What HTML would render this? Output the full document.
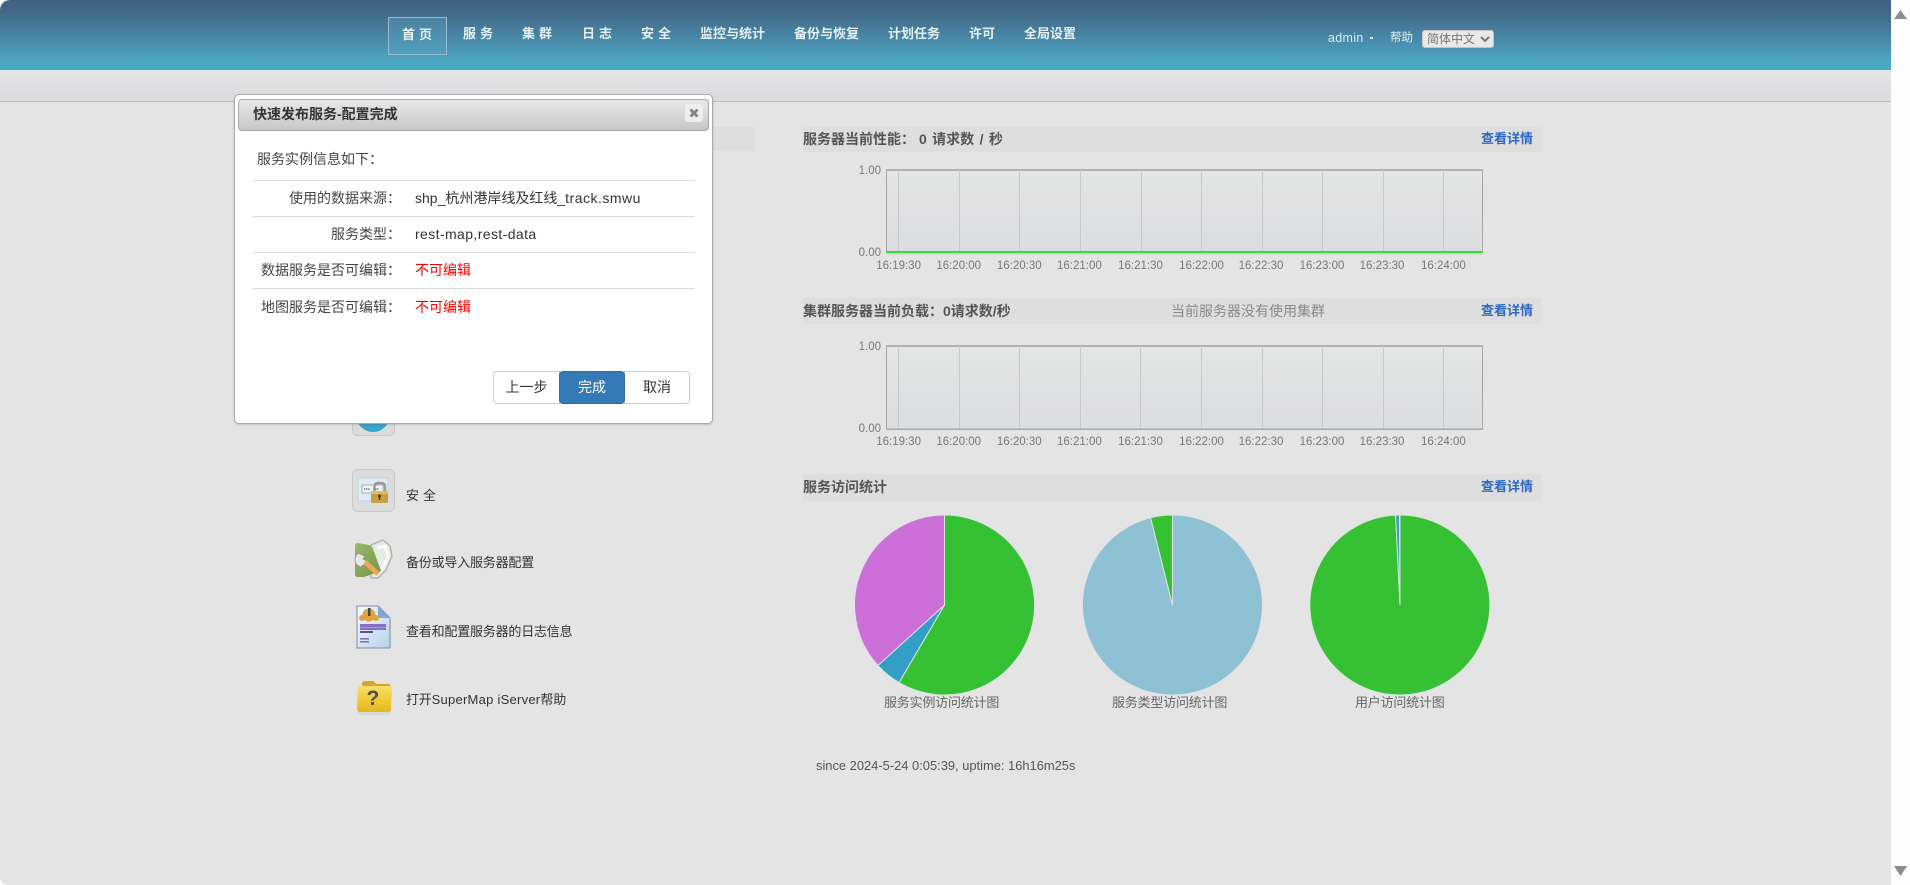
<!DOCTYPE html>
<html lang="zh-CN"><head><meta charset="utf-8"><title>SuperMap iServer</title>
<style>
html,body{margin:0;padding:0;width:1910px;height:885px;overflow:hidden;background:#fff}
body{font-family:"Liberation Sans","Noto Sans CJK SC",sans-serif;font-size:13px;color:#444;position:relative}
.a{position:absolute;white-space:nowrap;line-height:20px}
#page{position:absolute;left:0;top:0;width:1891px;height:885px;background:#e4e4e4;border-radius:10px 0 0 8px;overflow:hidden}
#hd{position:absolute;left:0;top:0;width:100%;height:70px;background:linear-gradient(#41607f 0,#436a89 20%,#4a8fae 62%,#4ba8c4 90%,#4ba8c4 100%)}
#sub{position:absolute;left:0;top:70px;width:100%;height:31px;background:linear-gradient(#e5e5e5,#dadbde);border-bottom:1px solid #b4bbc5}
.nav{color:#e6f0f3;font-weight:bold;font-size:13px;top:24px}
.hbar{position:absolute;left:803px;width:738px;background:#dedede}
.ht{font-weight:bold;color:#555;font-size:14px}
.more{left:1481px;color:#2c68c6;font-weight:bold}
.left{color:#333;letter-spacing:-.2px}
#dlg{position:absolute;left:234px;top:94px;width:477px;height:328px;background:#fff;border:1px solid #a9a9a9;border-radius:5px;box-shadow:0 1px 2px rgba(0,0,0,.15)}
#tb{position:absolute;left:3px;top:4px;width:469px;height:30px;background:linear-gradient(#e8e8e8,#c7c7c7);border:1px solid #a8a8a8;border-radius:4px}
.ln{position:absolute;left:252px;width:443px;height:1px;background:#dcdcdc}
.lb{left:232px;width:160px;text-align:right;color:#444;font-size:14px}
.c{display:inline-block;width:5px;text-align:left;overflow:visible}
.v{left:415px;color:#333;font-size:14px}
.btn{position:absolute;top:371px;height:31px;line-height:31px;text-align:center;background:#fff;border:1px solid #ccc;border-radius:4px;color:#333;font-size:14px}
svg{position:absolute;left:0;top:0}
</style></head><body>
<div id="page">
<div id="hd"></div><div id="sub"></div>
<div style="position:absolute;left:388px;top:17px;width:57px;height:36px;border:1px solid #9cbccb;background:rgba(90,170,195,.35)"></div>
<div class="a nav" style="left:402px;top:25px;letter-spacing:4px">首页</div>
<div class="a nav" style="left:463px;letter-spacing:4px">服务</div>
<div class="a nav" style="left:522px;letter-spacing:4px">集群</div>
<div class="a nav" style="left:582px;letter-spacing:4px">日志</div>
<div class="a nav" style="left:641px;letter-spacing:4px">安全</div>
<div class="a nav" style="left:700px">监控与统计</div>
<div class="a nav" style="left:794px">备份与恢复</div>
<div class="a nav" style="left:888px">计划任务</div>
<div class="a nav" style="left:969px">许可</div>
<div class="a nav" style="left:1024px">全局设置</div>
<div class="a" style="left:1328px;top:28px;color:#d6ebf1;font-size:12.5px;letter-spacing:.3px">admin</div>
<div style="position:absolute;left:1370px;top:37px;width:3px;height:2px;background:#d6ebf1"></div>
<div class="a" style="left:1390px;top:28px;color:#e4f0f3;font-size:11.5px">帮助</div>
<select style="position:absolute;left:1422px;top:30px;width:72px;height:18px;padding:0;margin:0;font:12px 'Liberation Sans','Noto Sans CJK SC',sans-serif;color:#777;background:#e9e9e9;border:1px solid #c4c4c4;border-radius:3px"><option>简体中文</option></select>

<div style="position:absolute;left:300px;top:127px;width:455px;height:24px;background:#dedede"></div>

<div style="position:absolute;left:352px;top:393px;width:41px;height:41px;background:#dcdcdc;border:1px solid #c9c9c9;border-radius:6px"></div>
<div style="position:absolute;left:352px;top:469px;width:41px;height:41px;background:#dcdcdc;border:1px solid #c9c9c9;border-radius:6px"></div>
<div class="a" style="left:406px;top:486px;letter-spacing:4px;color:#333">安全</div>
<div class="a left" style="left:406px;top:553px">备份或导入服务器配置</div>
<div class="a left" style="left:406px;top:622px">查看和配置服务器的日志信息</div>
<div class="a left" style="left:406px;top:690px">打开<span style="letter-spacing:.25px">SuperMap iServer</span>帮助</div>

<svg width="1891" height="885" viewBox="0 0 1891 885">
<defs>
<linearGradient id="g" x1="0" y1="0" x2="0" y2="1"><stop offset="0" stop-color="#e4e5e4"/><stop offset="1" stop-color="#dcdde0"/></linearGradient>
<linearGradient id="dc" x1="0" y1="0" x2="1" y2="1"><stop offset="0" stop-color="#f6f9fc"/><stop offset="1" stop-color="#b5d2ee"/></linearGradient>
<linearGradient id="fy" x1="0" y1="0" x2="0" y2="1"><stop offset="0" stop-color="#f8e06c"/><stop offset=".5" stop-color="#f3cb36"/><stop offset="1" stop-color="#e6b624"/></linearGradient>
<linearGradient id="gf" x1="0" y1="0" x2="1" y2="1"><stop offset="0" stop-color="#9abb6a"/><stop offset="1" stop-color="#6f9347"/></linearGradient>
</defs>
<circle cx="373" cy="415" r="17" fill="#3aa6cc"/>
<rect x="358" y="478" width="30" height="23" rx="2" fill="#dfebf2" stroke="#b7d6e8"/>
<rect x="362" y="485" width="21" height="8" fill="#f1f4f6" stroke="#8aa0b2" stroke-width=".8"/>
<path d="M364 489h6M373 489h6" stroke="#667" stroke-width="1.6" stroke-dasharray="1.3 .8"/>
<path d="M374.5 492v-5q0-4 4-4h2.5q4 0 4 4v5" fill="none" stroke="#9c9a94" stroke-width="2.4"/>
<rect x="371" y="491" width="17" height="12" rx="1.5" fill="#c99f45"/>
<rect x="371" y="491" width="17" height="3" fill="#e0bd6b"/>
<circle cx="379.5" cy="496" r="1.6" fill="#5a3e12"/><rect x="378.8" y="496" width="1.5" height="4" fill="#5a3e12"/>

<path d="M371 545L383 540L390 546L392 556L386 570L378 578L371 578Z" fill="#e8eae6" stroke="#a9b8a6" stroke-width="1.4"/>
<path d="M377 548L385 546L388 556L382 570" fill="none" stroke="#fafafa" stroke-width="3"/>
<path d="M355 546Q355 543 358 543L369 545Q372 546 373 549L381 571L364 577L358 577Q355 577 355 574Z" fill="url(#gf)"/>
<path d="M358 553L364 556L366 555L363 559L368 562L367 566L363 565L361 567Q355 565 355 560Q355 556 358 553Z" fill="#e6e8e2" stroke="#8f8f88" stroke-width=".7"/>
<path d="M365 562L378 574" stroke="#eba958" stroke-width="5"/>

<path d="M357 606H378L390 618V648H357Z" fill="url(#dc)" stroke="#7d88a5"/>
<path d="M378 606L390 618H378Z" fill="#7fa7da"/>
<circle cx="369" cy="615" r="6.5" fill="#e2a33f"/><circle cx="362" cy="618" r="3" fill="#e2a33f"/><circle cx="376" cy="618" r="3" fill="#e2a33f"/>
<rect x="368" y="608" width="2.5" height="8" fill="#444"/>
<rect x="360" y="624" width="26" height="6" fill="#8370c2"/>
<rect x="360" y="627" width="26" height="1" fill="#a99be0"/>
<rect x="360" y="631" width="13" height="2" fill="#5d4aa5"/>
<rect x="360" y="638" width="9" height="1.6" fill="#8370c2"/><rect x="360" y="641" width="9" height="1.6" fill="#8370c2"/>

<path d="M362 684Q362 681 365 681H372Q375 681 376 684H388Q391 684 391 687V696H362Z" fill="#d9a22d"/>
<path d="M358 688Q358 686 360 686H390Q392 686 392 689L391 709Q391 712 388 712H360Q357 712 357 709Z" fill="url(#fy)"/>
<path d="M357 712H391L388 715H360Z" fill="#d8d8d4"/>
<text x="366.5" y="705" font-family="Liberation Sans" font-size="21" font-weight="bold" fill="#4f4f4f">?</text>

<g id="c1">
<rect x="886.5" y="170" width="596" height="82" fill="url(#g)" stroke="#a4a4a4"/>
<rect x="886" y="169" width="597" height="2" fill="#b1b1b1"/>
<path d="M898.5 170v82M959.5 170v82M1019.5 170v82M1080.5 170v82M1141.5 170v82M1201.5 170v82M1262.5 170v82M1322.5 170v82M1383.5 170v82M1443.5 170v82" stroke="#c8c9ca"/>
<rect x="886" y="251" width="597" height="2" fill="#33dd33"/>
<rect x="886" y="253" width="597" height="2" fill="#d6d6d6"/>
</g>
<g id="c2">
<rect x="886.5" y="346" width="596" height="83" fill="url(#g)" stroke="#a4a4a4"/>
<rect x="886" y="345" width="597" height="2" fill="#b1b1b1"/>
<path d="M898.5 346v83M959.5 346v83M1019.5 346v83M1080.5 346v83M1140.5 346v83M1201.5 346v83M1262.5 346v83M1322.5 346v83M1383.5 346v83M1443.5 346v83" stroke="#c8c9ca"/>
<rect x="886" y="428.5" width="597" height="1.5" fill="#a9a9a9"/>
</g>
<g font-family="Liberation Sans" font-size="11.5" fill="#777" text-anchor="middle">
<text x="898.6" y="269">16:19:30</text><text x="958.7" y="269">16:20:00</text><text x="1019.3" y="269">16:20:30</text><text x="1079.4" y="269">16:21:00</text><text x="1140.5" y="269">16:21:30</text><text x="1201.5" y="269">16:22:00</text><text x="1261" y="269">16:22:30</text><text x="1322" y="269">16:23:00</text><text x="1382" y="269">16:23:30</text><text x="1443.4" y="269">16:24:00</text>
<text x="898.6" y="445">16:19:30</text><text x="958.7" y="445">16:20:00</text><text x="1019.3" y="445">16:20:30</text><text x="1079.4" y="445">16:21:00</text><text x="1140.5" y="445">16:21:30</text><text x="1201.5" y="445">16:22:00</text><text x="1261" y="445">16:22:30</text><text x="1322" y="445">16:23:00</text><text x="1382" y="445">16:23:30</text><text x="1443.4" y="445">16:24:00</text>
</g>
<g font-family="Liberation Sans" font-size="11.5" fill="#777" text-anchor="end">
<text x="881" y="174">1.00</text><text x="881" y="256">0.00</text><text x="881" y="350">1.00</text><text x="881" y="432">0.00</text>
</g>
<g stroke="#dfe3e3" stroke-width="1">
<path d="M944.5 605V515A90 90 0 1 1 899 682.6Z" fill="#35c133"/>
<path d="M944.5 605L899 682.6A90 90 0 0 1 877.9 665.5Z" fill="#339fc4"/>
<path d="M944.5 605L877.9 665.5A90 90 0 0 1 944.5 515Z" fill="#cd6fd9"/>
<path d="M1172.5 605V515A90 90 0 1 1 1150.6 517.7Z" fill="#8dc1d3"/>
<path d="M1172.5 605L1150.6 517.7A90 90 0 0 1 1172.5 515Z" fill="#35c133"/>
<path d="M1400 605V515A90 90 0 1 1 1395.6 515.1Z" fill="#35c133"/>
<path d="M1400 605L1395.6 515.1A90 90 0 0 1 1399.4 515Z" fill="#339fc4"/>
</g>
</svg>

<div class="hbar" style="top:127px;height:25px"></div>
<div class="a ht" style="left:803px;top:129px">服务器当前性能：</div>
<div class="a ht" style="left:919px;top:129px;word-spacing:1.5px">0 请求数 / 秒</div>
<div class="a more" style="top:129px">查看详情</div>
<div class="hbar" style="top:298px;height:26px"></div>
<div class="a ht" style="left:803px;top:301px">集群服务器当前负载：0请求数/秒</div>
<div class="a" style="left:1171px;top:301px;color:#8a8a8a;font-size:14px">当前服务器没有使用集群</div>
<div class="a more" style="top:301px">查看详情</div>
<div class="hbar" style="top:474px;height:27px"></div>
<div class="a ht" style="left:803px;top:477px">服务访问统计</div>
<div class="a more" style="top:477px">查看详情</div>
<div class="a" style="left:884px;top:693px;color:#666;letter-spacing:-.2px">服务实例访问统计图</div>
<div class="a" style="left:1112px;top:693px;color:#666;letter-spacing:-.2px">服务类型访问统计图</div>
<div class="a" style="left:1355px;top:693px;color:#666;letter-spacing:-.2px">用户访问统计图</div>
<div class="a" style="left:816px;top:756px;color:#555;font-size:12.9px">since 2024-5-24 0:05:39, uptime: 16h16m25s</div>

<div id="dlg"><div id="tb"></div>
<div style="position:absolute;left:450px;top:9px;width:18px;height:18px;background:#eee;border-radius:3px"><svg width="18" height="18" viewBox="0 0 18 18"><path d="M5.5 5.5L12.5 12.5M12.5 5.5L5.5 12.5" stroke="#858585" stroke-width="3"/></svg></div>
</div>
<div class="a" style="left:253px;top:104px;font-size:14px;font-weight:bold;color:#333">快速发布服务-配置完成</div>
<div class="a" style="left:257px;top:149px;font-size:14px;color:#444">服务实例信息如下<span class="c">：</span></div>
<div class="ln" style="top:180px"></div><div class="ln" style="top:216px"></div><div class="ln" style="top:252px"></div><div class="ln" style="top:288px"></div>
<div class="a lb" style="top:188px">使用的数据来源<span class="c">：</span></div>
<div class="a v" style="top:188px">shp_杭州港岸线及红线_<span style="letter-spacing:.5px">track.smwu</span></div>
<div class="a lb" style="top:224px">服务类型<span class="c">：</span></div>
<div class="a v" style="top:224px;letter-spacing:.4px">rest-map,rest-data</div>
<div class="a lb" style="top:260px">数据服务是否可编辑<span class="c">：</span></div>
<div class="a v" style="top:260px;color:#f00">不可编辑</div>
<div class="a lb" style="top:297px">地图服务是否可编辑<span class="c">：</span></div>
<div class="a v" style="top:297px;color:#f00">不可编辑</div>
<div class="btn" style="left:493px;width:65px;border-radius:4px 0 0 4px">上一步</div>
<div class="btn" style="left:624px;width:64px;border-radius:0 4px 4px 0">取消</div>
<div class="btn" style="left:559px;width:64px;background:#337ab7;border-color:#2e6da4;color:#fff">完成</div>
</div>

<div style="position:absolute;left:1891px;top:0;width:19px;height:885px;background:#fdfdfd;border-radius:0 7px 7px 0"></div>
<svg width="1910" height="885" viewBox="0 0 1910 885" style="pointer-events:none">
<path d="M1900.5 10L1907 19H1894Z" fill="#8c8c8c"/>
<path d="M1894 866H1907L1900.5 876Z" fill="#8c8c8c"/>
</svg>
</body></html>
